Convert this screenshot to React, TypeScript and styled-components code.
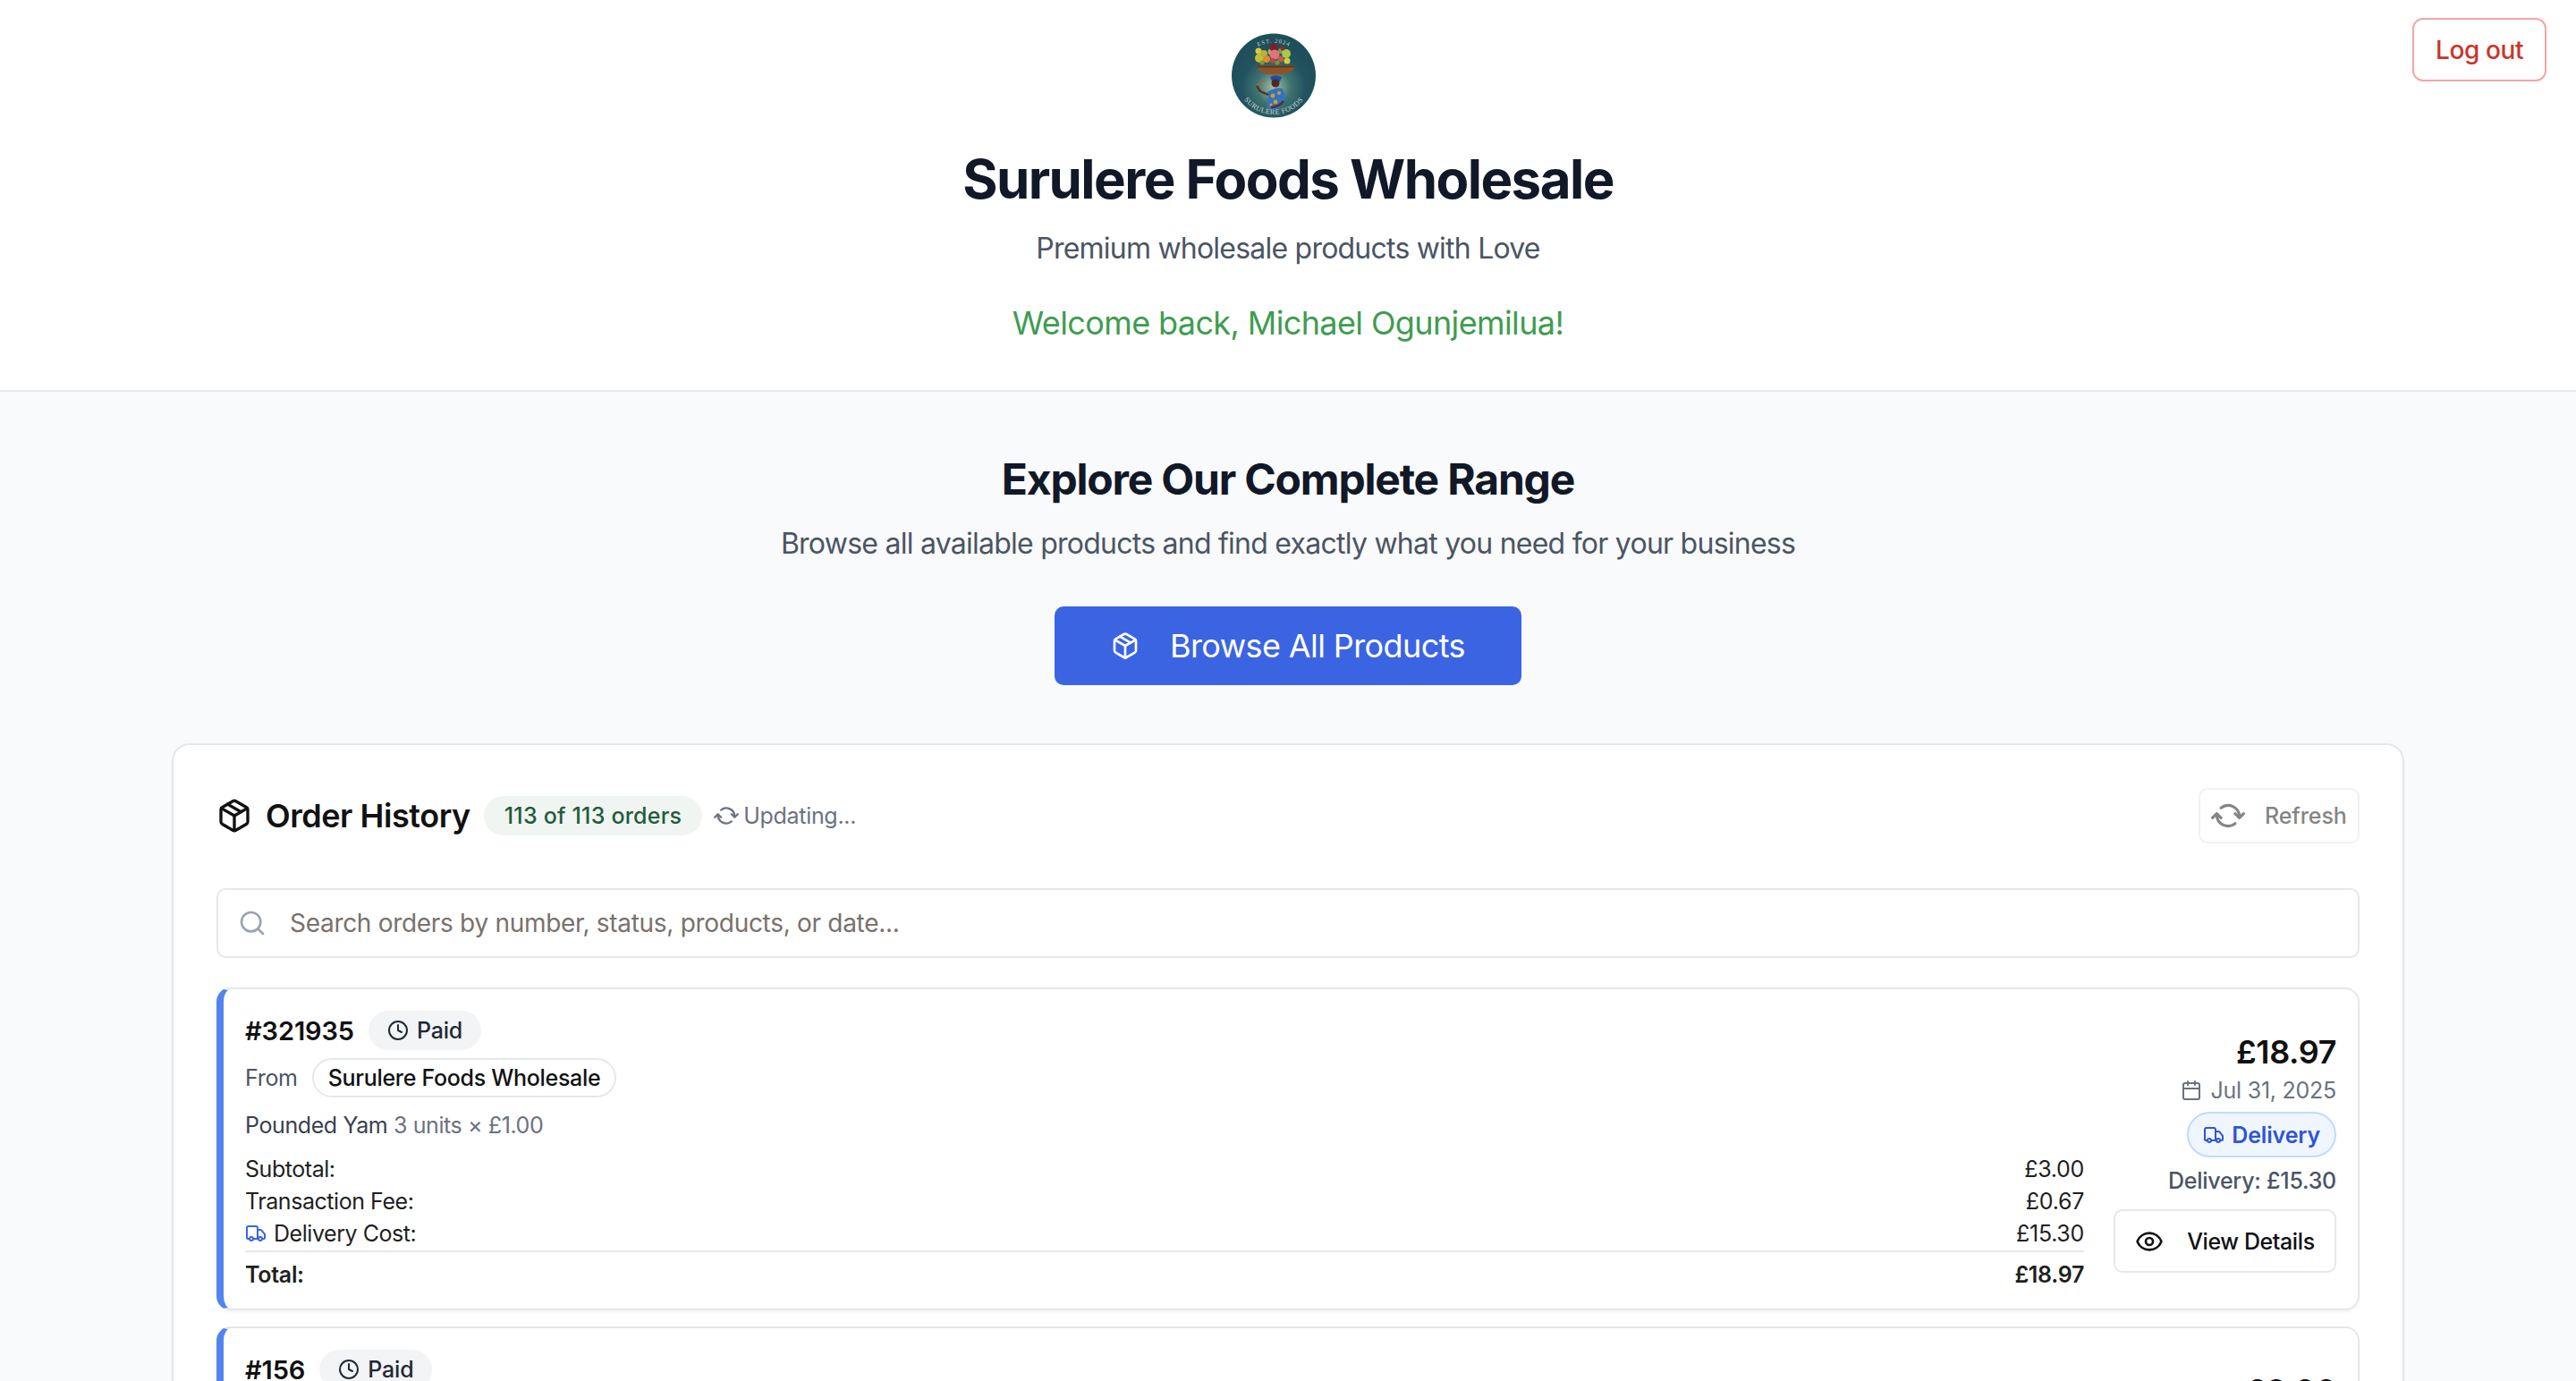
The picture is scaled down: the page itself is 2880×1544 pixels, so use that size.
import styled, { createGlobalStyle } from "styled-components";
import { Calendar, Clock, Eye, Package, Search, Truck } from "lucide-react";

const GlobalStyle = createGlobalStyle`
  html, body {
    margin: 0;
    padding: 0;
    height: 100%;
    overflow: hidden;
    background: #f9fafb;
    font-family: Inter, "Liberation Sans", sans-serif;
    color: #111827;
  }
  * { box-sizing: border-box; }
  button { font-family: inherit; }
`;

const Header = styled.header`
  position: relative;
  height: 438px;
  padding-top: 37px;
  background: #fff;
  border-bottom: 2px solid #e5e7eb;
  display: flex;
  flex-direction: column;
  align-items: center;
`;

const LogoMark = styled.svg`
  width: 94px;
  height: 95px;
  margin-right: 32px;
  display: block;
`;

const Title = styled.h1`
  margin: 32px 0 0;
  font-size: 60px;
  line-height: 72px;
  font-weight: 700;
  letter-spacing: -1.55px;
  color: #111827;
`;

const Subtitle = styled.p`
  margin: 18px 0 0;
  font-size: 32px;
  line-height: 48px;
  letter-spacing: -0.78px;
  color: #4b5563;
`;

const Welcome = styled.p`
  margin: 35px 0 0;
  font-size: 36px;
  line-height: 48px;
  font-weight: 400;
  letter-spacing: -0.62px;
  color: #3f9c50;
`;

const LogoutButton = styled.button`
  position: absolute;
  top: 20px;
  right: 33px;
  width: 150px;
  height: 71px;
  background: #fff;
  border: 2px solid #f3a6a6;
  border-radius: 12px;
  color: #c9352b;
  font-size: 28px;
  font-weight: 500;
  letter-spacing: -0.4px;
`;

const Main = styled.main`
  padding: 0 192px;
`;

const Explore = styled.section`
  padding-top: 68px;
  display: flex;
  flex-direction: column;
  align-items: center;
`;

const ExploreTitle = styled.h2`
  margin: 0;
  font-size: 48px;
  line-height: 60px;
  font-weight: 700;
  letter-spacing: -1.2px;
`;

const ExploreText = styled.p`
  margin: 18px 0 0;
  font-size: 32px;
  line-height: 48px;
  letter-spacing: -0.75px;
  color: #4b5563;
`;

const BrowseButton = styled.button`
  margin-top: 46px;
  width: 522px;
  height: 88px;
  background: #3b64e3;
  border: none;
  border-radius: 10px;
  color: #fff;
  font-size: 36px;
  font-weight: 400;
  letter-spacing: -0.6px;
  display: flex;
  align-items: center;
  justify-content: center;
  gap: 34px;
`;

const HistoryCard = styled.section`
  margin-top: 65px;
  background: #fff;
  border: 2px solid #e5e7eb;
  border-radius: 20px;
  padding: 48px 48px;
`;

const HistoryHead = styled.div`
  height: 62px;
  display: flex;
  align-items: center;
`;

const HistoryTitle = styled.h3`
  margin: 0 15px 0 15px;
  font-size: 36px;
  font-weight: 600;
  letter-spacing: -0.45px;
  color: #111;
`;

const CountPill = styled.span`
  height: 44px;
  padding: 0 23px;
  border-radius: 22px;
  background: #f0f5f2;
  color: #1f5c3a;
  font-size: 25px;
  font-weight: 500;
  letter-spacing: 0.2px;
  display: flex;
  align-items: center;
`;

const Updating = styled.span`
  margin-left: 13px;
  display: flex;
  align-items: center;
  gap: 5px;
  font-size: 25px;
  letter-spacing: -0.3px;
  color: #6b7280;
`;

const SpinIcon = styled.svg<{ $size: number }>`
  width: ${(p) => p.$size}px;
  height: ${(p) => p.$size}px;
  fill: none;
  stroke: currentColor;
  stroke-width: 2;
  stroke-linecap: round;
  stroke-linejoin: round;
  flex: none;
`;

const RefreshButton = styled.button`
  margin-left: auto;
  width: 180px;
  height: 62px;
  padding: 0 0 0 12px;
  background: #fff;
  border: 2px solid #f1f1f1;
  border-radius: 10px;
  color: #858585;
  font-size: 25px;
  font-weight: 500;
  letter-spacing: -0.1px;
  display: flex;
  align-items: center;
  gap: 22px;
`;

const SearchBox = styled.div`
  margin-top: 50px;
  height: 78px;
  border: 2px solid #e5e7eb;
  border-radius: 10px;
  padding: 0 22px;
  display: flex;
  align-items: center;
  gap: 26px;
  font-size: 28px;
  letter-spacing: -0.3px;
  color: #78716c;
`;

const OrderCard = styled.article`
  margin-top: 33px;
  border: 2px solid #e5e7eb;
  border-left: 8px solid #5384ee;
  border-radius: 16px;
  padding: 24px 24px 19px 24px;
  display: flex;
  gap: 33px;
  box-shadow: 0 2px 3px rgba(0, 0, 0, 0.05);
  & + & {
    margin-top: 18px;
  }
`;

const OrderMain = styled.div`
  flex: 1;
  min-width: 0;
`;

const OrderTop = styled.div`
  height: 44px;
  display: flex;
  align-items: center;
  gap: 16px;
`;

const OrderNo = styled.span`
  font-size: 29px;
  font-weight: 600;
  letter-spacing: -0.1px;
  color: #111;
`;

const StatusPill = styled.span`
  height: 44px;
  padding: 0 21px;
  border-radius: 22px;
  background: #f3f4f6;
  color: #1f2937;
  font-size: 25px;
  font-weight: 500;
  letter-spacing: -0.2px;
  display: flex;
  align-items: center;
  gap: 9px;
`;

const FromRow = styled.div`
  margin-top: 9px;
  height: 44px;
  display: flex;
  align-items: center;
  gap: 16px;
  font-size: 25px;
  letter-spacing: -0.3px;
  color: #4b5563;
`;

const VendorPill = styled.span`
  height: 44px;
  padding: 0 16px;
  border: 2px solid #e5e7eb;
  border-radius: 22px;
  color: #111;
  font-weight: 500;
  display: flex;
  align-items: center;
`;

const ItemRow = styled.div`
  margin-top: 14px;
  font-size: 25px;
  line-height: 34px;
  letter-spacing: -0.4px;
  color: #374151;
  & span {
    color: #6b7280;
  }
`;

const Costs = styled.div`
  margin-top: 14px;
`;

const CostRow = styled.div<{ $total?: boolean }>`
  height: ${(p) => (p.$total ? 46 : 36)}px;
  display: flex;
  align-items: center;
  justify-content: space-between;
  font-size: 25px;
  font-weight: ${(p) => (p.$total ? 600 : 400)};
  letter-spacing: -0.3px;
  color: #1f1f1f;
  ${(p) =>
    p.$total &&
    `
    margin-top: 1px;
    padding-top: 5px;
    border-top: 2px solid #e5e7eb;
  `}
`;

const CostLabel = styled.span`
  display: flex;
  align-items: center;
  gap: 8px;
  letter-spacing: -0.45px;
`;

const OrderSide = styled.div`
  width: 249px;
  padding-top: 24px;
  display: flex;
  flex-direction: column;
  align-items: flex-end;
`;

const Price = styled.div`
  font-size: 36px;
  line-height: 44px;
  font-weight: 600;
  letter-spacing: -0.4px;
  color: #111;
`;

const DateRow = styled.div`
  margin-top: 4px;
  display: flex;
  align-items: center;
  gap: 10px;
  font-size: 25px;
  line-height: 34px;
  letter-spacing: -0.25px;
  color: #6b7280;
`;

const DeliveryPill = styled.span`
  margin-top: 7px;
  height: 51px;
  padding: 0 16px;
  border: 2px solid #bfdbfe;
  border-radius: 26px;
  background: #eff6ff;
  color: #2f55d4;
  font-size: 25px;
  font-weight: 600;
  letter-spacing: -0.15px;
  display: flex;
  align-items: center;
  gap: 8px;
`;

const DeliveryCost = styled.div`
  margin-top: 9px;
  font-size: 25px;
  line-height: 34px;
  font-weight: 500;
  letter-spacing: -0.25px;
  color: #4b5563;
`;

const DetailsButton = styled.button`
  margin-top: 15px;
  width: 249px;
  height: 71px;
  background: #fff;
  border: 2px solid #e5e7eb;
  border-radius: 10px;
  color: #111;
  font-size: 25px;
  font-weight: 500;
  letter-spacing: -0.4px;
  display: flex;
  align-items: center;
  justify-content: center;
  gap: 26px;
`;

const fruit: [number, number, number, string][] = [
  [31, 28, 5, "#c4bf35"],
  [30, 20, 3.5, "#d9c93c"],
  [36, 23, 4, "#b7b23a"],
  [39, 29, 4, "#e08a2e"],
  [44, 21, 3.5, "#a8b848"],
  [47, 16, 4.5, "#7c1f2a"],
  [48, 24, 5.5, "#e2737c"],
  [55, 20, 3, "#8a9a3a"],
  [61, 23, 5, "#a9c84a"],
  [57, 17, 2.5, "#8d2a32"],
  [55, 29, 3.5, "#c9574a"],
  [62, 31, 3.5, "#d8cb3a"],
  [46, 31, 3, "#b84a3a"],
  [51, 33, 2.5, "#6f9a3c"],
  [34, 33, 2.5, "#7f9a3a"],
];

function Logo() {
  return (
    <LogoMark viewBox="0 0 94 95">
      <defs>
        <radialGradient id="logoBg" cx="50%" cy="64%" r="50%">
          <stop offset="0%" stopColor="#a9c0a4" />
          <stop offset="40%" stopColor="#3f7472" />
          <stop offset="75%" stopColor="#225460" />
          <stop offset="100%" stopColor="#1f4f5a" />
        </radialGradient>
        <path id="logoTop" d="M12 34 A38 38 0 0 1 82 34" />
        <path id="logoBottom" d="M6.5 60 A42 42 0 0 0 87.5 60" />
      </defs>
      <circle cx="47" cy="47.5" r="47" fill="url(#logoBg)" />
      <text fontSize="6.5" fill="#c9d8d2" fontFamily="Liberation Serif, serif" letterSpacing="1" textAnchor="middle">
        <textPath href="#logoTop" startOffset="50%">EST. 2024</textPath>
      </text>
      <text fontSize="8" fill="#c9d8d2" fontFamily="Liberation Serif, serif" letterSpacing="0.5" textAnchor="middle">
        <textPath href="#logoBottom" startOffset="50%">SURULERE FOODS</textPath>
      </text>
      {fruit.map(([cx, cy, r, fill]) => (
        <circle key={`${cx}-${cy}`} cx={cx} cy={cy} r={r} fill={fill} />
      ))}
      <path d="M28 36.5 H71 Q68 46 52 46.5 H46 Q31 46 28 36.5Z" fill="#8f5228" />
      <path d="M28 36.5 H71 V38.5 H28Z" fill="#5e3a1e" />
      <path d="M43 49 Q49 45.5 56 49 L54 54 H45Z" fill="#1f4fa0" />
      <circle cx="49" cy="56" r="4.5" fill="#4f2a1c" />
      <path d="M40 66 Q48 60 57 62 Q61 70 60 76 L55 77 L54 84 Q46 87 40 84 L41 73Z" fill="#2f74c0" />
      <circle cx="46" cy="70" r="2.4" fill="#e0962e" />
      <circle cx="53" cy="67" r="2" fill="#e0962e" />
      <circle cx="49" cy="77" r="2.4" fill="#e0962e" />
      <circle cx="44" cy="80" r="1.6" fill="#e0962e" />
      <path d="M41 69 L32 65 L28 59" stroke="#5a3020" strokeWidth="2.4" fill="none" />
      <path d="M28 58 L37 53" stroke="#a5624a" strokeWidth="1.5" />
      <path d="M44 83 Q53 83 58 76" stroke="#5a3020" strokeWidth="2.4" fill="none" />
    </LogoMark>
  );
}

function Spin({ size }: { size: number }) {
  return (
    <SpinIcon $size={size} viewBox="0 0 24 24">
      <path d="M7 6.5A8 8 0 0 1 20 12.5" />
      <path d="M17 10.5l3 3 3-3" />
      <path d="M17 17.5A8 8 0 0 1 4 11.5" />
      <path d="M1 13.5l3-3 3 3" />
    </SpinIcon>
  );
}

type Cost = { label: string; value: string; truck?: boolean };

const costs: Cost[] = [
  { label: "Subtotal:", value: "£3.00" },
  { label: "Transaction Fee:", value: "£0.67" },
  { label: "Delivery Cost:", value: "£15.30", truck: true },
];

function FirstOrder() {
  return (
    <OrderCard>
      <OrderMain>
        <OrderTop>
          <OrderNo>#321935</OrderNo>
          <StatusPill>
            <Clock size={24} strokeWidth={2} />
            Paid
          </StatusPill>
        </OrderTop>
        <FromRow>
          From
          <VendorPill>Surulere Foods Wholesale</VendorPill>
        </FromRow>
        <ItemRow>
          Pounded Yam <span>3 units × £1.00</span>
        </ItemRow>
        <Costs>
          {costs.map((c) => (
            <CostRow key={c.label}>
              <CostLabel>
                {c.truck && <Truck size={24} color="#3b64e3" />}
                {c.label}
              </CostLabel>
              <span>{c.value}</span>
            </CostRow>
          ))}
          <CostRow $total>
            <span>Total:</span>
            <span>£18.97</span>
          </CostRow>
        </Costs>
      </OrderMain>
      <OrderSide>
        <Price>£18.97</Price>
        <DateRow>
          <Calendar size={24} />
          Jul 31, 2025
        </DateRow>
        <DeliveryPill>
          <Truck size={24} />
          Delivery
        </DeliveryPill>
        <DeliveryCost>Delivery: £15.30</DeliveryCost>
        <DetailsButton>
          <Eye size={32} />
          View Details
        </DetailsButton>
      </OrderSide>
    </OrderCard>
  );
}

function SecondOrder() {
  return (
    <OrderCard>
      <OrderMain>
        <OrderTop>
          <OrderNo>#156</OrderNo>
          <StatusPill>
            <Clock size={24} strokeWidth={2} />
            Paid
          </StatusPill>
        </OrderTop>
      </OrderMain>
      <OrderSide>
        <Price>£9.00</Price>
      </OrderSide>
    </OrderCard>
  );
}

export default function App() {
  return (
    <>
      <GlobalStyle />
      <Header>
        <Logo />
        <Title>Surulere Foods Wholesale</Title>
        <Subtitle>Premium wholesale products with Love</Subtitle>
        <Welcome>Welcome back, Michael Ogunjemilua!</Welcome>
        <LogoutButton>Log out</LogoutButton>
      </Header>
      <Main>
        <Explore>
          <ExploreTitle>Explore Our Complete Range</ExploreTitle>
          <ExploreText>Browse all available products and find exactly what you need for your business</ExploreText>
          <BrowseButton>
            <Package size={32} />
            Browse All Products
          </BrowseButton>
        </Explore>
        <HistoryCard>
          <HistoryHead>
            <Package size={40} color="#111" />
            <HistoryTitle>Order History</HistoryTitle>
            <CountPill>113 of 113 orders</CountPill>
            <Updating>
              <Spin size={28} />
              Updating...
            </Updating>
            <RefreshButton>
              <Spin size={38} />
              Refresh
            </RefreshButton>
          </HistoryHead>
          <SearchBox>
            <Search size={32} color="#9ca3af" />
            Search orders by number, status, products, or date...
          </SearchBox>
          <FirstOrder />
          <SecondOrder />
        </HistoryCard>
      </Main>
    </>
  );
}
